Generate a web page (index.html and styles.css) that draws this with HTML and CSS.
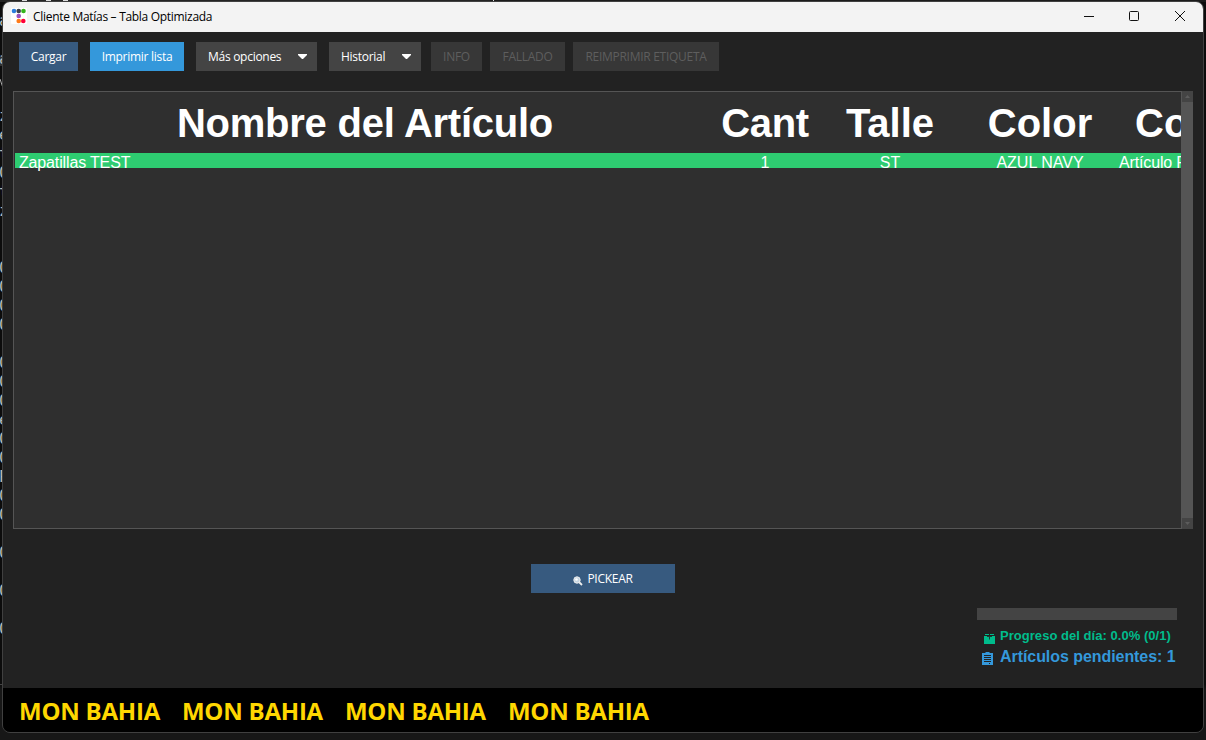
FILE: index.html
```html
<!DOCTYPE html>
<html lang="es">
<head>
<meta charset="utf-8">
<title>Cliente Matías – Tabla Optimizada</title>
<link rel="stylesheet" href="styles.css">
</head>
<body>
<div class="desktop">
<svg class="backdrop" width="1206" height="740" aria-hidden="true">
<path d="M0 0H490V2H0Z" fill="#242424"/><path d="M490 0H1206V2H490Z" fill="#1b1b1b"/>
<path d="M22 0h5v1h-5zM46 0h5v1h-5zM63 0h5v1h-5zM493 0h1v2h-1z" fill="#ddd"/>
<path d="M0 57h3v9H0z" fill="#333"/><path d="M0 684h3v1H0z" fill="#444"/>
<path d="M0 79L3 88" stroke="#aaa" fill="none"/>
</svg>
<pre class="terminal">a

a


z
e
t
0
t
z
'
'
0
0
0
0

0
0
0
e
0
0
P
0
0

0

0

0</pre>
<main class="window">
<header class="titlebar">
<svg class="logo" width="16" height="16" viewBox="0 0 16 16"><rect width="16" height="16" rx="1" fill="#fff"/><circle cx="3" cy="3" r="2.300" fill="#2d7ddc"/><circle cx="7.700" cy="3" r="2.300" fill="#3c424e"/><circle cx="12.500" cy="3" r="2.300" fill="#35b51c"/><circle cx="7.700" cy="8" r="2.300" fill="#9a50bd"/><circle cx="7.700" cy="13" r="2.300" fill="#ff7a18"/><circle cx="12.300" cy="13" r="2.300" fill="#ff0038"/></svg>
<span class="title">Cliente Matías – Tabla Optimizada</span>
<svg class="controls" width="104" height="14" viewBox="0 0 104 14" fill="none" stroke="#111"><path d="M1 7.500h10"/><rect x="46.500" y="2.500" width="9" height="9" rx="1"/><path d="M92 2l10 10M102 2l-10 10"/></svg>
</header>
<nav class="toolbar">
<button class="btn primary w-cargar"><span>Cargar</span></button>
<button class="btn info w-imprimir"><span>Imprimir lista</span></button>
<button class="btn menu w-mas"><span>Más opciones</span><svg width="9" height="5" viewBox="0 0 9 5"><path d="M0 0h9v1L5 5H4L0 1z" fill="#fff"/></svg></button>
<button class="btn menu w-historial"><span>Historial</span><svg width="9" height="5" viewBox="0 0 9 5"><path d="M0 0h9v1L5 5H4L0 1z" fill="#fff"/></svg></button>
<button class="btn off w-info"><span>INFO</span></button>
<button class="btn off w-fallado"><span>FALLADO</span></button>
<button class="btn off w-reimprimir"><span>REIMPRIMIR ETIQUETA</span></button>
</nav>
<section class="table-area">
<div class="table">
<div class="row head"><span class="name">Nombre del Artículo</span><span class="cant">Cant</span><span>Talle</span><span>Color</span><span class="last">Co</span></div>
<div class="row item"><span class="name">Zapatillas TEST</span><span>1</span><span>ST</span><span>AZUL NAVY</span><span class="last">Artículo F</span></div>
</div>
<div class="scrollbar">
<div class="arrow"><svg width="5" height="3"><path d="M0 3h5L2.500 0z" fill="#5c5c5c"/></svg></div>
<div class="thumb"></div>
<div class="arrow"><svg width="5" height="3"><path d="M0 0h5L2.500 3z" fill="#5c5c5c"/></svg></div>
</div>
</section>
<button class="btn primary pick"><svg width="10" height="10" viewBox="0 0 10 10"><path d="M5.500 5.500L9 9" stroke="#eee" stroke-width="1.800"/><circle cx="4" cy="4" r="3.200" fill="#c5d5e2" stroke="#eee"/><circle cx="3.500" cy="3.500" r="1.300" fill="#fff"/></svg><span>PICKEAR</span></button>
<section class="status">
<div class="progress"></div>
<div class="line day"><svg width="11" height="10" viewBox="0 0 11 10"><path d="M0 2h11v8H0z" fill="#00bc8c"/><path d="M1 .5h4M6 .5h4" stroke="#00bc8c"/><path d="M3 2.500h5M5.500 2v3.500" stroke="#1c3d33"/></svg><span>Progreso del día: 0.0% (0/1)</span></div>
<div class="line pending"><svg width="12" height="14" viewBox="0 0 12 14"><path d="M0 1h3.500V0h4v1H11V13H0z" fill="#3498db"/><path d="M2 3.500h7M2 5.500h7M2 7.500h7M2 9.500h7M7 11.500h1" stroke="#222"/></svg><span>Artículos pendientes: 1</span></div>
</section>
<footer class="brands"><span>MON BAHIA</span><span>MON BAHIA</span><span>MON BAHIA</span><span>MON BAHIA</span></footer>
</main>
</div>
</body>
</html>
```
FILE: styles.css
```css
* { box-sizing: border-box; }
body { margin: 0; background: #0c0c0c; overflow: hidden; }
.desktop { position: relative; width: 1206px; height: 740px; padding: 1px 2px; background: linear-gradient(#0c0c0c 0 684px, #171717 690px 100%); overflow: hidden; }
.backdrop { position: absolute; left: 0; top: 0; }
.terminal { position: absolute; left: -1px; top: 11px; margin: 0; font: 16px/19px "DejaVu Sans Mono", monospace; color: #bbb; }
.window { position: relative; width: 1202px; height: 732px; border: 1px solid #404040; border-radius: 8px; background: #222; overflow: hidden; display: flex; flex-direction: column; font-family: "Open Sans", sans-serif; }
.titlebar { height: 30px; flex: none; background: #f3f3f3; display: flex; align-items: center; padding: 0 16px 2px 8px; color: #000; font-size: 12px; }
.logo { margin-right: 6px; }
.title { letter-spacing: -0.300px; white-space: nowrap; }
.controls { margin-left: auto; }
.toolbar { display: flex; flex: none; padding: 10px 16px 0; height: 59px; }
.btn { height: 29px; border: 0; padding: 0 0 1px; border-radius: 0; display: flex; align-items: center; justify-content: center; color: #fff; font: 12px "Open Sans", sans-serif; letter-spacing: -0.280px; white-space: nowrap; }
.primary { background: #375a7f; }
.info { background: #3498db; }
.menu { background: #444; justify-content: space-between; padding: 0 10px 1px 12px; }
.off { background: #373737; color: #5e5e5e; }
.w-cargar { width: 59px; margin-right: 12px; }
.w-imprimir { width: 94px; margin-right: 12px; }
.w-mas { width: 121px; margin-right: 12px; }
.w-historial { width: 92px; margin-right: 10px; }
.w-info { width: 51px; margin-right: 8px; }
.w-fallado { width: 75px; margin-right: 8px; }
.w-reimprimir { width: 146px; }
.table-area { margin-left: 10px; width: 1180px; height: 438px; display: flex; flex: none; }
.table { width: 1168px; border: 1px solid #555; border-right: 0; padding: 1px 0 0 1px; background: #2f2f2f; color: #fff; font-family: "Liberation Sans", Arial, sans-serif; overflow: hidden; }
.row { display: grid; grid-template-columns: 700px 100px 150px 150px 67px; text-align: center; white-space: nowrap; }
.head { height: 60px; font-size: 40px; font-weight: bold; line-height: 61px; }
.head .name { letter-spacing: -0.250px; }
.head .cant { letter-spacing: -0.400px; }
.head .last { text-align: left; padding-left: 20px; }
.item { height: 15px; line-height: 20px; font-size: 16px; background: #2ecc71; }
.item .name { text-align: left; padding-left: 4px; letter-spacing: -0.150px; }
.item .last { text-align: left; padding-left: 4px; letter-spacing: -0.150px; }
.scrollbar { width: 12px; display: flex; flex-direction: column; background: #555; }
.arrow { height: 11px; margin-left: 1px; background: #444; display: flex; align-items: center; justify-content: center; }
.thumb { flex: 1; }
.pick { width: 144px; margin: 35px 0 0 528px; flex: none; gap: 4px; }
.pick svg { margin-top: 5px; }
.status { margin: 15px 26px 0 auto; width: 200px; height: 80px; flex: none; font-family: "Liberation Sans", Arial, sans-serif; font-weight: bold; white-space: nowrap; }
.progress { height: 12px; background: #444; }
.line { display: flex; align-items: center; }
.day { height: 20px; margin-top: 6px; padding-left: 7px; gap: 5px; color: #00bc8c; font-size: 13px; letter-spacing: 0.040px; }
.day svg { margin-top: 5px; }
.day span { margin-top: -2px; }
.pending { height: 22px; padding-left: 5px; gap: 6px; color: #3498db; font-size: 16px; letter-spacing: -0.060px; }
.pending svg { margin-top: 3px; }
.pending span { margin-top: -1px; }
.brands { flex: none; height: 44px; background: #000; color: #ffd700; display: flex; align-items: center; gap: 22px; padding: 2px 0 0 16px; font-size: 24px; font-weight: 700; letter-spacing: -0.230px; white-space: nowrap; line-height: 40px; }
```
